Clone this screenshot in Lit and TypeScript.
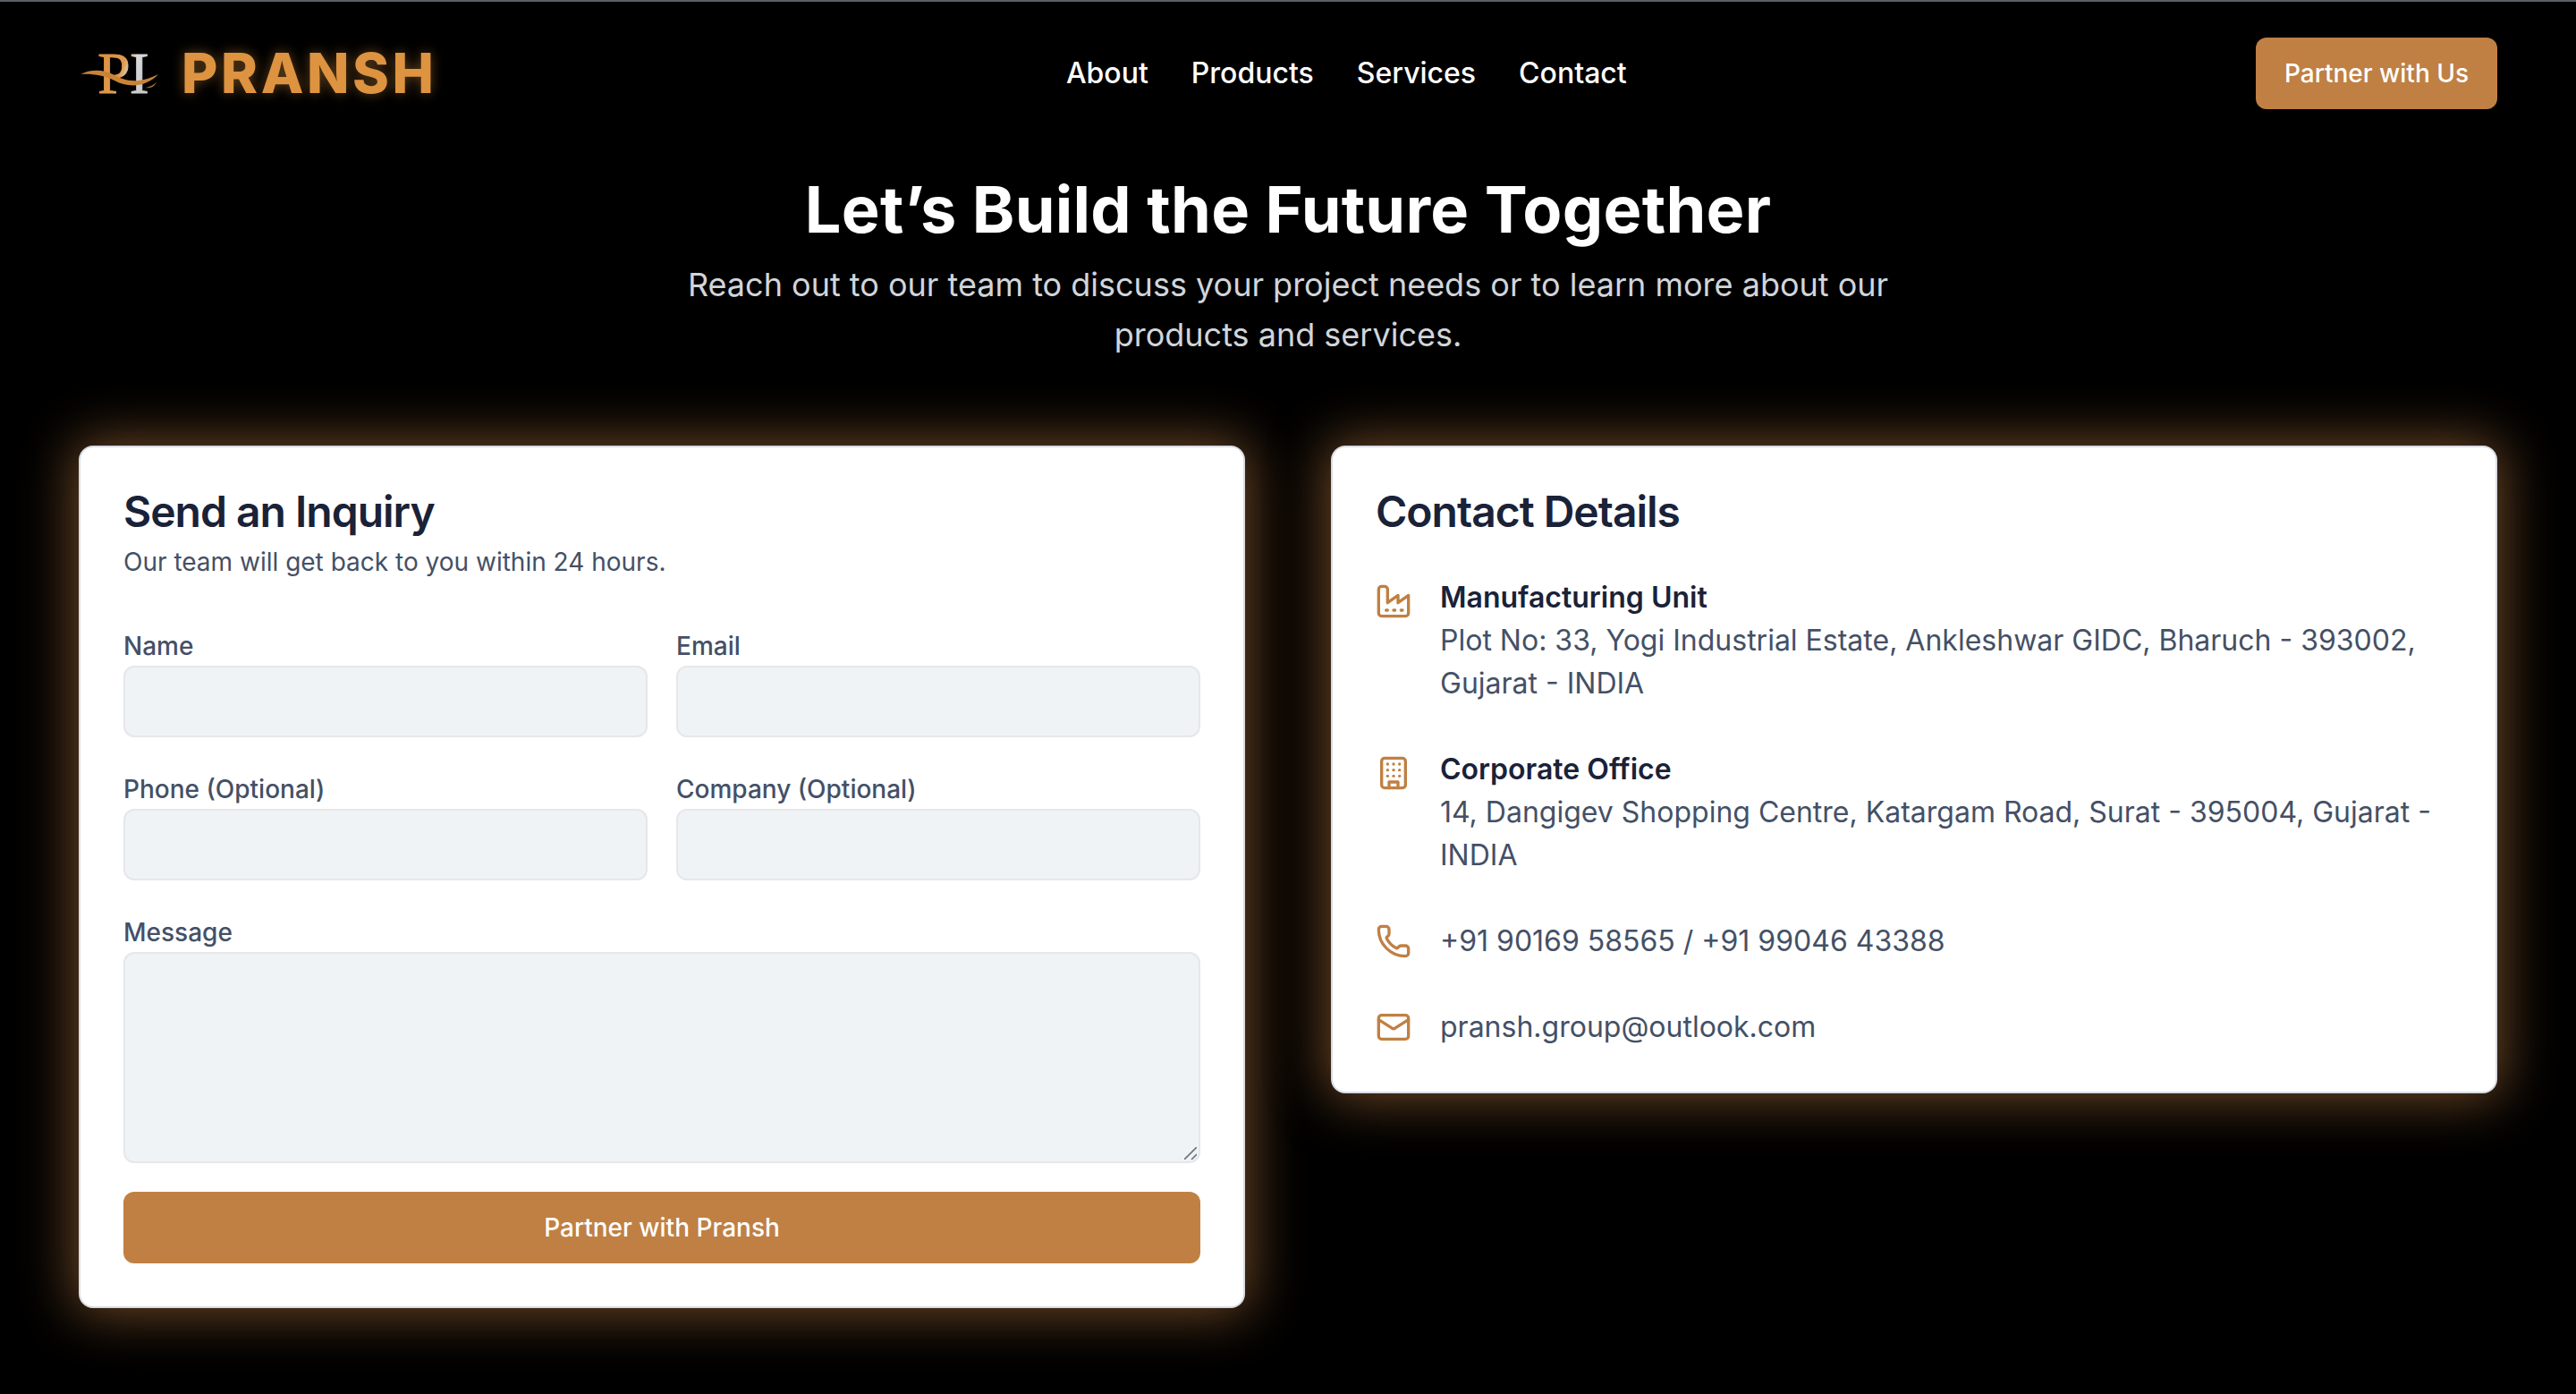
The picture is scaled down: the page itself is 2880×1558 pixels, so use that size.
import {LitElement, css, html} from "lit";
import {customElement} from "lit/decorators.js";

const factoryIcon = html`<svg class="icon" viewBox="0 0 24 24"><path d="M2 20a2 2 0 0 0 2 2h16a2 2 0 0 0 2-2V8l-7 5V8l-7 5V4a2 2 0 0 0-2-2H4a2 2 0 0 0-2 2Z"/><path d="M17 18h1"/><path d="M12 18h1"/><path d="M7 18h1"/></svg>`;
const buildingIcon = html`<svg class="icon" viewBox="0 0 24 24"><rect width="16" height="20" x="4" y="2" rx="2"/><path d="M9 22v-4h6v4"/><path d="M8 6h.01"/><path d="M16 6h.01"/><path d="M12 6h.01"/><path d="M12 10h.01"/><path d="M12 14h.01"/><path d="M16 10h.01"/><path d="M16 14h.01"/><path d="M8 10h.01"/><path d="M8 14h.01"/></svg>`;
const phoneIcon = html`<svg class="icon single" viewBox="0 0 24 24"><path d="M13.832 16.568a1 1 0 0 0 1.213-.303l.355-.465A2 2 0 0 1 17 15h3a2 2 0 0 1 2 2v3a2 2 0 0 1-2 2A18 18 0 0 1 2 4a2 2 0 0 1 2-2h3a2 2 0 0 1 2 2v3a2 2 0 0 1-.8 1.6l-.468.351a1 1 0 0 0-.292 1.233 14 14 0 0 0 6.392 6.384"/></svg>`;
const mailIcon = html`<svg class="icon single" viewBox="0 0 24 24"><path d="m22 7-8.991 5.727a2 2 0 0 1-2.009 0L2 7"/><rect x="2" y="4" width="20" height="16" rx="2"/></svg>`;

@customElement("app-root")
export class AppRoot extends LitElement {
    static styles = css`
        :host {
            display: block;
            box-sizing: border-box;
            min-height: 100vh;
            background: #000;
            border-top: 2px solid #5b6067;
            font-family: Inter, "Liberation Sans", sans-serif;
            color: #445066;
        }
        * {
            box-sizing: border-box;
        }
        header {
            display: flex;
            align-items: center;
            justify-content: space-between;
            padding: 40px 88px;
        }
        .brand {
            display: flex;
            align-items: center;
            gap: 25px;
        }
        .mark {
            display: block;
            width: 90px;
            height: 52px;
            overflow: visible;
        }
        .wordmark {
            font-family: Inter, sans-serif;
            font-weight: 800;
            font-size: 62px;
            line-height: 72px;
            letter-spacing: 3.6px;
            color: #dd9340;
            text-shadow: 0 0 14px rgba(221, 147, 64, 0.45);
        }
        nav {
            display: flex;
            gap: 48px;
        }
        nav a {
            font-size: 32px;
            line-height: 48px;
            font-weight: 500;
            color: #fff;
            text-decoration: none;
        }
        button {
            height: 80px;
            border: 0;
            border-radius: 12px;
            background: #c08043;
            color: #fff;
            font-family: inherit;
            font-size: 28px;
            font-weight: 500;
            cursor: pointer;
        }
        .cta {
            width: 270px;
        }
        .hero {
            padding-top: 32px;
            text-align: center;
        }
        h1 {
            margin: 0 0 16px;
            font-size: 72px;
            line-height: 80px;
            font-weight: 700;
            letter-spacing: 0.25px;
            color: #fff;
        }
        .hero p {
            margin: 0 auto;
            max-width: 1344px;
            font-size: 36px;
            line-height: 56px;
            color: #d1d5db;
        }
        main {
            display: grid;
            grid-template-columns: 1fr 1fr;
            gap: 96px;
            align-items: start;
            padding: 96px 88px 0;
        }
        .card {
            padding: 48px;
            background: #fff;
            border: 2px solid #d8dce3;
            border-radius: 16px;
            box-shadow: 0 0 60px 6px rgba(196, 128, 67, 0.56);
        }
        h2 {
            margin: 0;
            font-size: 48px;
            line-height: 48px;
            font-weight: 600;
            letter-spacing: -1px;
            color: #1a2238;
        }
        .lead {
            margin: 12px 0 48px;
            font-size: 28px;
            line-height: 40px;
        }
        form {
            display: grid;
            grid-template-columns: 1fr 1fr;
            gap: 32px;
        }
        label {
            display: block;
            padding-top: 6px;
            font-size: 28px;
            line-height: 40px;
            font-weight: 500;
        }
        input, textarea {
            display: block;
            width: 100%;
            margin-top: 2px;
            background: #f0f3f5;
            border: 2px solid #e5e7eb;
            border-radius: 12px;
            outline: none;
        }
        input {
            height: 80px;
        }
        textarea {
            height: 236px;
            resize: none;
        }
        .area {
            position: relative;
        }
        .grip {
            position: absolute;
            right: 4px;
            bottom: 4px;
            width: 14px;
            height: 14px;
            pointer-events: none;
            stroke: #6b7280;
            stroke-width: 1.6;
        }
        .wide {
            grid-column: 1 / -1;
        }
        .items {
            display: flex;
            flex-direction: column;
            gap: 48px;
            margin-top: 48px;
        }
        .item {
            display: flex;
            gap: 32px;
            font-size: 32px;
            line-height: 48px;
        }
        .item strong {
            display: block;
            font-weight: 600;
            color: #1a2238;
        }
        .icon {
            flex: none;
            width: 40px;
            height: 40px;
            margin-top: 8px;
            fill: none;
            stroke: #c08043;
            stroke-width: 2;
            stroke-linecap: round;
            stroke-linejoin: round;
        }
        .icon.single {
            margin-top: 4px;
        }
    `;

    protected render() {
        return html`
            <header>
                <div class="brand">
                    <svg class="mark" viewBox="0 0 90 52">
                        <defs>
                            <linearGradient id="metal" x1="0" y1="0" x2="1" y2="0.5">
                                <stop offset="0" stop-color="#d98f3f"/>
                                <stop offset="0.55" stop-color="#e0994a"/>
                                <stop offset="0.72" stop-color="#d9dade"/>
                                <stop offset="1" stop-color="#c9c9cc"/>
                            </linearGradient>
                        </defs>
                        <text x="21" y="48" font-family="Liberation Serif" font-size="66" letter-spacing="-1" fill="url(#metal)" stroke="url(#metal)" stroke-width="0.8">PI</text>
                        <path d="M2 27C12 22 26 21 38 27C50 34 66 39 89 27C76 41 56 43 40 34C28 28 14 26 2 27Z" fill="#c98338"/>
                        <path d="M75 42C80 41 84 39 87 36C85 40 81 43 75 42Z" fill="#b97a38"/>
                    </svg>
                    <span class="wordmark">PRANSH</span>
                </div>
                <nav>
                    <a href="#">About</a>
                    <a href="#">Products</a>
                    <a href="#">Services</a>
                    <a href="#">Contact</a>
                </nav>
                <button class="cta">Partner with Us</button>
            </header>
            <section class="hero">
                <h1>Let’s Build the Future Together</h1>
                <p>Reach out to our team to discuss your project needs or to learn more about our products and services.</p>
            </section>
            <main>
                <section class="card">
                    <h2>Send an Inquiry</h2>
                    <p class="lead">Our team will get back to you within 24 hours.</p>
                    <form @submit=${(e: Event) => e.preventDefault()}>
                        <label>Name<input type="text"></label>
                        <label>Email<input type="email"></label>
                        <label>Phone (Optional)<input type="tel"></label>
                        <label>Company (Optional)<input type="text"></label>
                        <label class="wide">Message
                            <div class="area">
                                <textarea></textarea>
                                <svg class="grip" viewBox="0 0 14 14"><path d="M0 14 14 0M8 14l6-6"/></svg>
                            </div>
                        </label>
                        <button class="wide" type="submit">Partner with Pransh</button>
                    </form>
                </section>
                <section class="card">
                    <h2>Contact Details</h2>
                    <div class="items">
                        <div class="item">
                            ${factoryIcon}
                            <div><strong>Manufacturing Unit</strong>Plot No: 33, Yogi Industrial Estate, Ankleshwar GIDC, Bharuch - 393002, Gujarat - INDIA</div>
                        </div>
                        <div class="item">
                            ${buildingIcon}
                            <div><strong>Corporate Office</strong>14, Dangigev Shopping Centre, Katargam Road, Surat - 395004, Gujarat - INDIA</div>
                        </div>
                        <div class="item">
                            ${phoneIcon}
                            <div>+91 90169 58565 / +91 99046 43388</div>
                        </div>
                        <div class="item">
                            ${mailIcon}
                            <div>pransh.group@outlook.com</div>
                        </div>
                    </div>
                </section>
            </main>
        `;
    }
}
